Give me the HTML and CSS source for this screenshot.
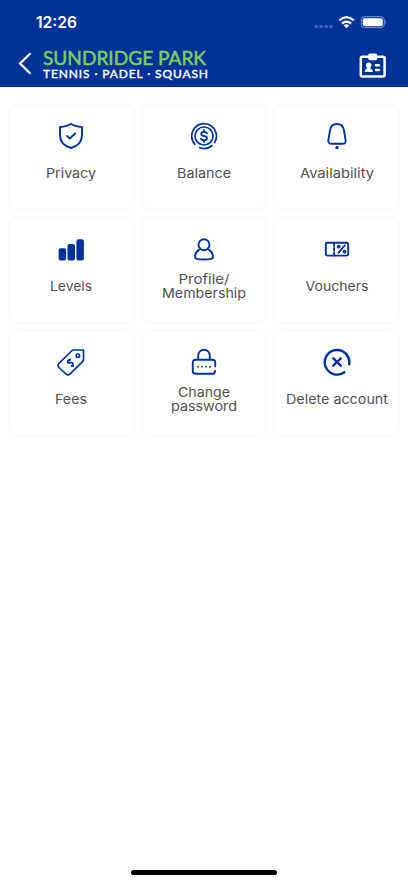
FILE: index.html
```html
<!DOCTYPE html>
<html lang="en">
<head>
<meta charset="utf-8">
<meta name="viewport" content="width=device-width, initial-scale=1">
<title>Sundridge Park</title>
<link rel="stylesheet" href="styles.css">
</head>
<body>
<div class="screen">
  <header class="header">
    <div class="status">
      <svg class="clock" width="43" height="20"><text x="0" y="15" textLength="41" lengthAdjust="spacingAndGlyphs">12:26</text></svg>
      <svg class="signals" width="74" height="16" viewBox="0 0 74 16">
        <g fill="#3d65b8"><circle cx="2.3" cy="11.5" r="1.8"/><circle cx="7.2" cy="11.5" r="1.8"/><circle cx="12.1" cy="11.5" r="1.8"/><circle cx="17" cy="11.5" r="1.8"/></g>
        <g fill="none" stroke="#fff" stroke-width="2.3"><path d="M25.300 5.400Q32.500 -1.100 39.700 5.400"/><path d="M28 8.500Q32.500 4.700 37 8.500"/></g>
        <path d="M29.700 10.300Q32.500 8.200 35.300 10.300L32.500 13.200Z" fill="#fff"/>
        <rect x="47.300" y="1.700" width="23" height="11" rx="3.400" fill="none" stroke="#7f9acc"/>
        <rect x="48.800" y="3.200" width="20" height="8" rx="2" fill="#fff"/>
        <path d="M71.500 5.600q1.700 1.600 0 3.400z" fill="#7f9acc"/>
      </svg>
    </div>
    <div class="nav">
      <svg class="back" width="14" height="23" viewBox="0 0 14 23"><path d="M12.500 1.200L2 11.500L12.500 21.800" fill="none" stroke="#fff" stroke-width="2.2"/></svg>
      <svg class="brand" width="168" height="36" viewBox="0 0 168 36">
        <text class="brand-name" x="0" y="20" textLength="163" lengthAdjust="spacingAndGlyphs">SUNDRIDGE PARK</text>
        <text class="brand-sub" x="0" y="32.700" textLength="165" lengthAdjust="spacing">TENNIS · PADEL · SQUASH</text>
      </svg>
      <svg class="badge" width="28" height="26" viewBox="0 0 28 26">
        <rect x="1.800" y="3.700" width="23.800" height="19.900" rx="1.500" fill="none" stroke="#fff" stroke-width="2.500"/>
        <rect x="9.300" y=".4" width="8.800" height="6.800" rx="1.400" fill="#fff"/>
        <g fill="#fff"><circle cx="9.700" cy="12.200" r="2.700"/><path d="M8.400 13h2.600v2.200q2.600.4 2.700 3.800h-8q.1-3.400 2.700-3.800z"/><rect x="15.800" y="11" width="5.200" height="2.400" rx="1"/><rect x="15.800" y="15.800" width="5.200" height="2.400" rx="1"/></g>
      </svg>
    </div>
  </header>
  <main class="grid">
    <a class="card">
      <svg class="icon" viewBox="0 0 28 28"><path d="M14 1.800C17 4 20.500 4.700 25 5V13C25 20 21.500 23.800 14 26C6.500 23.800 3 20 3 13V5C7.500 4.700 11 4 14 1.800Z"/><path d="M10 13.900L12.800 16.500L18.200 11.400"/></svg>
      <svg class="label" width="120" height="18"><text x="60" y="14" textLength="50" lengthAdjust="spacingAndGlyphs">Privacy</text></svg>
    </a>
    <a class="card">
      <svg class="icon thin" viewBox="0 0 28 28"><path d="M5 22.500A12.400 12.400 0 1 1 24.500 20.700M22 23.500A12.400 12.400 0 0 1 9.500 25.600"/><circle cx="14" cy="14" r="9"/><path class="coin" d="M17 11.300Q16.400 9.900 14 9.900Q11.200 9.900 11.200 11.900Q11.200 13.600 14 14Q17 14.400 17 16.200Q17 18.200 14 18.200Q11.400 18.200 11 16.700M14 8.200V9.900M14 18.200V19.900"/></svg>
      <svg class="label" width="120" height="18"><text x="60" y="14" textLength="54" lengthAdjust="spacingAndGlyphs">Balance</text></svg>
    </a>
    <a class="card">
      <svg class="icon" viewBox="0 0 28 28"><path d="M14 2C9.800 2 7.500 4.500 7 8.500L5.400 18Q4.900 21.700 8 21.700H20Q23.100 21.700 22.600 18L21 8.500C20.500 4.500 18.200 2 14 2Z"/><circle class="solid" cx="14" cy="25.500" r="1.700"/></svg>
      <svg class="label" width="120" height="18"><text x="60" y="14" textLength="74" lengthAdjust="spacingAndGlyphs">Availability</text></svg>
    </a>
    <a class="card">
      <svg class="icon" viewBox="0 0 28 28"><g class="solid"><rect x="1.600" y="13.200" width="7.500" height="12.200" rx="2"/><rect x="10.500" y="8.900" width="7.500" height="16.500" rx="2"/><rect x="19.400" y="4.200" width="7.500" height="21.200" rx="2"/></g></svg>
      <svg class="label" width="120" height="18"><text x="60" y="14" textLength="42" lengthAdjust="spacingAndGlyphs">Levels</text></svg>
    </a>
    <a class="card tall">
      <svg class="icon" viewBox="0 0 28 28"><circle cx="14" cy="9.700" r="5.500"/><path d="M9 14.800C6.500 16.200 5 19.300 5 22.200Q5 24.500 14 24.500Q23 24.500 23 22.200C23 19.300 21.500 16.200 19 14.800"/></svg>
      <svg class="label" width="120" height="32"><text x="60" y="14" textLength="51" lengthAdjust="spacingAndGlyphs">Profile/</text><text x="60" y="28" textLength="84" lengthAdjust="spacingAndGlyphs">Membership</text></svg>
    </a>
    <a class="card">
      <svg class="icon" viewBox="0 0 28 28"><rect x="2.800" y="7.800" width="22.400" height="12.800" rx="1.500"/><path d="M11.100 8v3M11.100 13v2.500M11.100 17.500v3M15.500 17.800L21.700 10.500"/><circle class="solid" cx="15.700" cy="11.700" r="1.900"/><circle class="solid" cx="21.500" cy="16.700" r="1.900"/></svg>
      <svg class="label" width="120" height="18"><text x="60" y="14" textLength="63" lengthAdjust="spacingAndGlyphs">Vouchers</text></svg>
    </a>
    <a class="card">
      <svg class="icon thin" viewBox="0 0 28 28"><path d="M16.800 2H26.500V11.500Q26.500 12.600 25.500 13.600L13.200 25.800Q11 28 8.800 25.800L2 19.500Q0 17.500 2 15.300L14.500 3Q15.500 2 16.800 2Z"/><circle cx="20.900" cy="7.700" r="1.700"/><path class="coin" d="M13.300 11.500L12.100 12.700M12.800 12.100Q11.500 11.700 10.800 13.200Q10.400 14.700 12 15Q15.100 14.200 15.800 15.300Q16.800 16.800 14.500 17.900M15.300 17.200L16.200 18.100"/></svg>
      <svg class="label" width="120" height="18"><text x="60" y="14" textLength="32" lengthAdjust="spacingAndGlyphs">Fees</text></svg>
    </a>
    <a class="card tall">
      <svg class="icon" viewBox="0 0 28 28"><path d="M8.200 11.500V7.500A5.800 5.800 0 0 1 19.800 7.500V11.500M25.200 18.500V14.500Q25.200 11.700 22.400 11.700H5.600Q2.800 11.700 2.800 14.500V23Q2.800 25.800 5.600 25.800H22.400Q24.800 25.800 25.200 23"/><path class="dots" d="M8 18.700h.1M12 18.700h.1M16 18.700h.1M20 18.700h.1"/></svg>
      <svg class="label" width="120" height="32"><text x="60" y="14" textLength="52" lengthAdjust="spacingAndGlyphs">Change</text><text x="60" y="28" textLength="66" lengthAdjust="spacingAndGlyphs">password</text></svg>
    </a>
    <a class="card">
      <svg class="icon bold" viewBox="0 0 28 28"><path d="M21.300 24.200A12.300 12.300 0 1 1 26.200 16.200M10.300 10.300L17.700 17.700M17.700 10.300L10.300 17.700"/></svg>
      <svg class="label" width="120" height="18"><text x="60" y="14" textLength="102" lengthAdjust="spacingAndGlyphs">Delete account</text></svg>
    </a>
  </main>
  <div class="home"></div>
</div>
</body>
</html>
```
FILE: styles.css
```css
* { box-sizing: border-box; }
body { margin: 0; background: #fff; font-family: Inter, sans-serif; }
svg { display: block; flex: none; }
.screen { width: 408px; height: 883px; display: flex; flex-direction: column; overflow: hidden; }
.header { height: 87px; background: #003399; flex: none; }
.status { height: 45px; padding: 13px 20px 0 36px; display: flex; justify-content: space-between; }
.signals { margin-top: 2px; }
.clock text { font: 600 15.5px Inter, sans-serif; fill: #fff; }
.nav { height: 42px; display: flex; align-items: flex-start; padding-left: 18px; }
.back { margin-top: 7px; }
.brand { margin: 0 0 0 11px; }
.brand-name { font: 400 18.5px Lato, sans-serif; fill: #78d05c; stroke: #78d05c; stroke-width: .5px; }
.brand-sub { font: 400 12px Lato, sans-serif; fill: #fff; stroke: #fff; stroke-width: .4px; }
.badge { margin: 8px 21px 0 auto; }
.grid { padding: 18px 10px 0; display: grid; grid-template-columns: repeat(3, 122.5px); grid-auto-rows: 104px; column-gap: 10.2px; row-gap: 8.8px; }
.card { border-radius: 7px; background: #fff; box-shadow: 0 0 4px rgba(0, 0, 0, .06); display: flex; flex-direction: column; align-items: center; padding-top: 17px; }
.icon { width: 28px; height: 28px; fill: none; stroke: #003399; stroke-width: 1.9; stroke-linecap: round; stroke-linejoin: round; }
.thin { stroke-width: 1.65; }
.bold { stroke-width: 2.4; }
.coin { stroke-width: 1.8; }
.solid { fill: #003399; stroke: none; }
.dots { stroke-width: 1.8; }
.label { margin-top: 14px; }
.tall .label { margin-top: 7px; }
.label text { font: 400 13px Inter, sans-serif; fill: #505050; text-anchor: middle; }
.home { width: 146px; height: 5px; border-radius: 3px; background: #000; margin: auto auto 8px; }
```
